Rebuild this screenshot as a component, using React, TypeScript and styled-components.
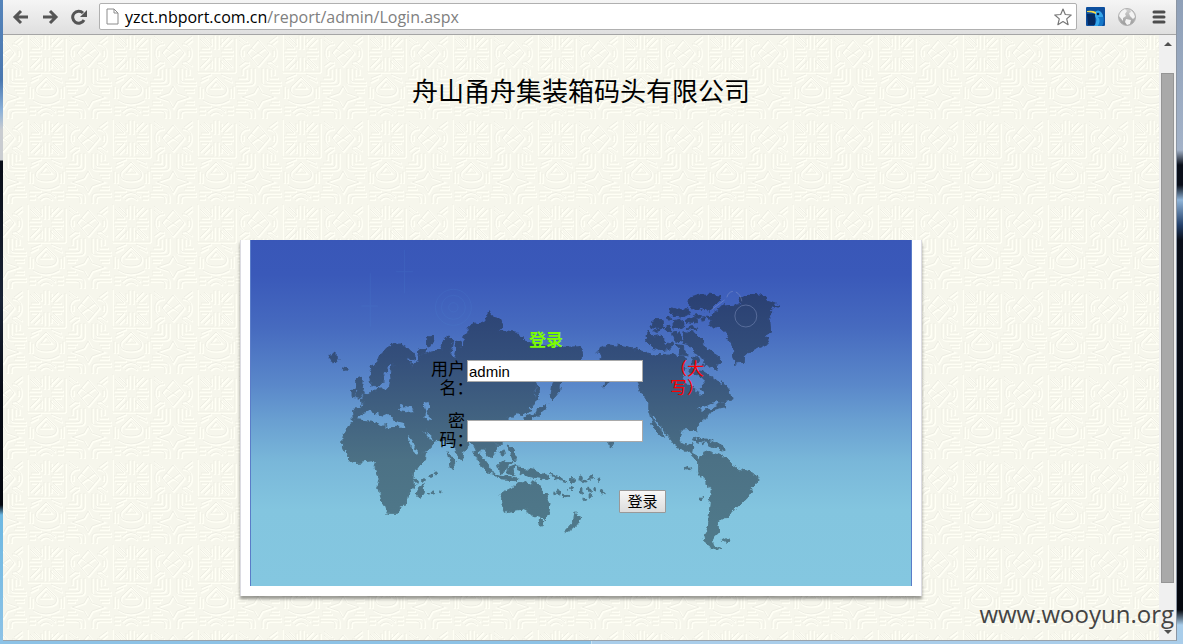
import React from 'react';
import styled, { createGlobalStyle } from 'styled-components';

const GlobalStyle = createGlobalStyle`
  *, *::before, *::after { box-sizing: border-box; }
  body { margin: 0; }
`;

const cjk = `'Liberation Sans', 'Noto Sans CJK SC', sans-serif`;
const chromeFont = `'Open Sans', 'Noto Sans', sans-serif`;

const Desktop = styled.div`
  display: flex;
  min-height: 100vh;
  padding: 0 6px 3px 3px;
  background:
    linear-gradient(180deg, #8fa0b8 0, #a3b2c8 150px, #0a0f1a 165px, #0a0f1a 185px, #8fb4d8 200px, #24406a 225px, #0a0f1a 240px, #05080f 610px, #a9cdea 625px) right / 50% 100% no-repeat,
    linear-gradient(180deg, #5584ba 0, #4a78b0 80px, #8ab0d8 110px, #c9ccd0 130px, #c9ccd0 160px, #080c16 161px, #1a2436 300px, #080c16 390px, #05080f 505px, #6db8e2 515px, #8cc2e6 640px) left / 50% 100% no-repeat;
`;

const BrowserWindow = styled.div`
  display: flex;
  flex: 1;
  flex-direction: column;
  border-right: 1px solid #8b95a3;
  border-bottom: 1px solid #9aa3ab;
  background: #f1f1f1;
`;

const Toolbar = styled.header`
  display: flex;
  align-items: center;
  height: 35px;
  padding: 0 7px 1px 9px;
  border-bottom: 1px solid #a5a5a5;
  background: linear-gradient(#f5f5f5, #dfdfdf);
`;

const NavButton = styled.button`
  display: flex;
  align-items: center;
  justify-content: center;
  width: 29px;
  height: 24px;
  padding: 0 11px 0 0;
  border: 0;
  background: none;
  svg { flex: none; }
`;

const AddressBar = styled.div`
  display: flex;
  flex: 1;
  align-items: center;
  gap: 6px;
  height: 27px;
  margin-right: 8px;
  padding: 0 3px 0 6px;
  border: 1px solid #b0b0b0;
  border-radius: 2px;
  background: #fff;
`;

const Address = styled.div`
  flex: 1;
  color: #808080;
  font: 16px/24px ${chromeFont};
  white-space: nowrap;
  b { color: #000; font-weight: 400; }
`;

const ToolButton = styled.button`
  display: flex;
  align-items: center;
  justify-content: center;
  width: 20px;
  height: 24px;
  padding: 0;
  border: 0;
  background: none;
`;

const Tools = styled.div`
  display: flex;
  gap: 12px;
`;

const Viewport = styled.div`
  display: flex;
  flex: 1;
`;

const Page = styled.main`
  position: relative;
  display: flex;
  flex: 1;
  flex-direction: column;
  align-items: center;
  padding: 35px 8px 44px;
`;

const Texture = styled.svg`
  position: absolute;
  inset: 0;
  width: 100%;
  height: 100%;
`;

const Company = styled.h1`
  position: relative;
  margin: 0 0 130px;
  color: #000;
  font: 400 26px/40px STXingkai, 'Noto Sans CJK SC', sans-serif;
`;

const Card = styled.section`
  position: relative;
  width: 100%;
  max-width: 682px;
  padding: 0 9px 10px;
  border: solid #dcdce2;
  border-width: 0 1px;
  background: #fff;
  box-shadow: 0 3px 3px rgba(0, 0, 0, 0.4);
`;

const Banner = styled.div`
  position: relative;
  min-height: 346px;
  padding: 91px 0 73px 178px;
  border: solid #5a7cc8;
  border-width: 0 1px;
`;

const MapArt = styled.svg`
  position: absolute;
  inset: 0;
  width: 100%;
  height: 100%;
`;

const LoginForm = styled.form`
  position: relative;
  display: grid;
  grid-template-columns: 36px 196px 41px;
  grid-template-rows: 29px 52px 78px auto;
  column-gap: 2px;
  align-items: start;
  font: 17px/19px ${cjk};
`;

const FormTitle = styled.h2`
  grid-column: 1 / 3;
  margin: 0;
  color: #7cfc00;
  font: inherit;
  font-weight: 700;
  text-align: center;
`;

const FieldLabel = styled.label`
  grid-column: 1;
  color: #000;
  font-feature-settings: 'halt';
  text-align: right;
`;

const TextInput = styled.input<{ $centred?: boolean }>`
  width: 176px;
  height: 22px;
  margin: ${(p) => (p.$centred ? 8 : 0)}px 0 0;
  padding: 1px;
  border: 1px solid #a9a9a9;
  border-radius: 0;
  background: #fff;
  color: #000;
  font: 15px/18px 'Liberation Sans', sans-serif;
  outline: 0;
`;

const Hint = styled.span`
  padding-left: 5px;
  color: #f00;
`;

const Actions = styled.div`
  grid-column: 2 / -1;
  padding-left: 152px;
`;

const SubmitButton = styled.button`
  display: block;
  width: 47px;
  height: 23px;
  padding: 0;
  border: 1px solid #999;
  border-radius: 1px;
  background: linear-gradient(#f7f7f7, #dcdcdc);
  color: #000;
  font: 15px/20px ${cjk};
`;

const ScrollTrack = styled.div`
  display: flex;
  flex-direction: column;
  align-items: center;
  justify-content: space-between;
  width: 17px;
  padding: 7px 0 6px;
  background: #f0f0f0;
`;

const ScrollThumb = styled.div`
  flex: 1;
  width: 13px;
  margin: 27px 0 47px;
  border: 1px solid #959595;
  background: #a9a9a9;
`;

const Watermark = styled.div`
  position: absolute;
  right: 9px;
  bottom: 13px;
  color: #444;
  font: 24px/34px ${chromeFont};
`;

const LAND = [
  // Europe and Asia
  'M368 572 366 545 372 538 396 535 402 522 388 510 400 500 425 485 445 478 470 476 480 468 484 445 482 425 492 402 488 395 475 410 463 435 460 455 447 470 435 470 422 460 420 425 432 405 445 395 452 378 470 355 490 343 515 342 525 352 545 362 557 378 550 390 532 382 548 412 570 378 600 365 640 358 635 345 645 322 660 318 670 330 662 370 675 388 682 362 675 335 690 330 700 352 706 346 700 320 718 310 720 290 745 278 768 276 783 243 790 262 815 268 820 285 808 300 845 308 870 310 880 325 900 338 950 345 1000 352 1050 350 1060 362 1060 400 1000 420 940 430 918 460 915 480 920 510 898 545 872 560 862 548 838 564 850 600 820 640 795 640 803 665 788 685 772 676 760 656 745 670 735 650 720 632 714 652 704 665 700 692 692 690 680 660 672 640 650 632 622 628 600 655 575 668 545 664 528 620 500 592 440 580 395 570Z',
  // Africa
  'M340 620 350 595 370 575 395 568 435 565 445 580 470 592 500 592 527 600 535 615 550 650 565 668 592 666 588 690 570 705 555 725 553 750 555 775 538 785 535 810 515 835 498 850 468 850 462 830 452 800 450 780 443 770 448 745 442 720 433 712 438 698 430 692 405 695 370 698 350 675 338 655Z',
  // British Isles, Iceland, Arctic islands
  'M376 448 392 442 398 455 395 470 408 490 390 502 376 500 385 485Z',
  'M366 480 376 472 380 490 368 500Z',
  'M296 376 312 370 328 385 320 396 303 388Z',
  'M590 325 605 318 613 332 604 353 592 345Z',
  'M560 368 570 360 585 358 584 370 570 376Z',
  // Madagascar
  'M568 768 584 762 580 790 572 806 562 800Z',
  'M656 665 666 680 677 700 672 720 665 712Z',
  // Kamchatka, Sakhalin, Japan
  'M972 455 998 455 995 480 975 504 966 498Z',
  'M919 458 930 472 931 510 922 510Z',
  'M946 524 956 520 944 540 926 555 905 567 890 572 884 562 912 552 930 540Z',
  // Indonesia, Philippines, New Guinea
  'M730 662 745 665 775 705 792 730 776 726 752 700Z',
  'M788 732 830 738 866 744 862 752 820 750Z',
  'M802 706 830 690 840 700 830 726 810 730Z',
  'M838 715 862 706 848 720 858 736 840 732Z',
  'M834 648 848 655 866 690 852 692Z',
  'M862 710 890 716 930 724 955 736 962 750 935 745 900 740 875 730Z',
  'M958 730 990 742 1012 758 990 752Z',
  // Australia, Tasmania, New Zealand
  'M813 800 820 785 850 775 862 762 885 752 893 762 908 770 915 750 925 758 938 782 955 800 963 820 960 845 945 867 915 860 900 845 880 838 860 840 825 847 820 830Z',
  'M927 872 946 872 937 892Z',
  'M1035 845 1045 855 1056 860 1045 880 1020 904 1006 904 1030 878Z',
  // North and Central America
  'M1105 368 1112 354 1140 345 1180 350 1230 360 1280 375 1320 372 1362 378 1372 402 1395 420 1425 425 1450 440 1480 465 1482 455 1502 480 1508 510 1480 515 1490 530 1450 540 1430 565 1410 582 1404 610 1392 598 1360 600 1352 620 1358 640 1375 648 1388 640 1395 655 1392 672 1410 682 1412 692 1395 685 1378 668 1340 645 1325 625 1305 600 1275 560 1260 545 1260 520 1240 490 1230 460 1210 430 1160 430 1125 472 1135 440 1110 388 1120 384Z',
  'M1262 548 1272 570 1300 602 1311 628 1290 612 1270 585Z',
  // Canadian archipelago
  'M1250 330 1258 303 1275 320 1300 315 1312 335 1322 358 1300 362 1272 355Z',
  'M1370 305 1400 310 1420 330 1430 355 1465 375 1480 395 1462 400 1466 422 1440 412 1425 390 1405 370 1385 345 1362 340Z',
  'M1380 202 1420 192 1476 195 1470 215 1444 238 1430 245 1410 232 1395 240 1378 218Z',
  'M1265 278 1290 268 1305 275 1296 294 1270 290Z',
  'M1322 240 1340 232 1360 240 1376 232 1384 250 1362 262 1335 258Z',
  'M1338 318 1355 308 1360 330 1350 340 1338 334Z',
  'M1340 345 1365 350 1380 378 1360 375Z',
  'M1330 272 1352 268 1370 282 1352 296 1335 290Z',
  // Greenland
  'M1436 262 1460 245 1484 228 1540 224 1530 208 1562 193 1600 195 1622 215 1650 226 1630 240 1624 260 1626 300 1612 320 1620 340 1590 352 1560 365 1545 380 1544 396 1520 400 1508 385 1515 365 1506 330 1490 308 1470 290 1436 292 1455 272Z',
  // South America
  'M1410 690 1420 675 1445 665 1485 680 1500 695 1530 718 1565 725 1586 740 1582 765 1568 780 1560 800 1530 830 1505 845 1500 865 1480 867 1465 885 1470 905 1450 925 1455 945 1476 952 1455 958 1435 950 1428 915 1440 880 1443 840 1448 775 1435 765 1418 735 1410 720Z',
  'M1480 932 1492 926 1503 932 1490 940Z',
  'M1138 635 1156 640 1142 652Z',
  'M1388 628 1400 622 1420 628 1448 634 1482 648 1490 664 1470 656 1440 642 1410 636Z',
];

const ISLETS: number[][] = [
  [347, 419, 6, 5], [1377, 715, 8, 5], [1417, 808, 4, 4], [560, 752, 7, 4], [582, 750, 6, 4], [604, 738, 6, 4],
  [618, 730, 6, 4], [597, 793, 4, 3], [612, 789, 4, 3], [628, 786, 4, 3], [986, 790, 6, 8], [1012, 795, 10, 5],
  [1028, 775, 6, 7], [1030, 750, 9, 5], [1055, 745, 5, 7], [1068, 755, 9, 4], [1086, 744, 4, 4], [1110, 748, 6, 4],
  [1055, 780, 4, 8], [1080, 780, 4, 9], [1098, 776, 5, 4], [1120, 786, 6, 6], [1066, 808, 4, 4], [1085, 798, 5, 5],
  [1320, 262, 8, 5], [1345, 250, 8, 5], [1318, 298, 9, 7], [1335, 312, 6, 8], [1390, 272, 14, 8], [1408, 258, 10, 7],
  [1390, 295, 14, 5], [1285, 302, 7, 5], [1405, 330, 7, 5], [1325, 345, 6, 9], [1398, 392, 12, 12], [1440, 400, 15, 7],
  [1425, 268, 7, 5], [1300, 288, 8, 5], [820, 670, 5, 8], [846, 698, 6, 4],
];

const SEAS = [
  'M385 568 400 550 420 540 430 555 438 545 455 560 480 555 495 572 527 580 527 590 500 590 478 592 468 582 450 590 440 574Z',
  'M506 535 520 526 530 533 545 532 552 543 530 547 508 544Z',
  'M580 522 597 518 600 530 588 540 596 552 600 570 585 566 586 548Z',
  'M533 618 542 622 552 648 566 668 558 674 545 655Z',
  'M582 600 592 612 606 614 618 626 606 626 588 616Z',
  'M1370 418 1395 425 1424 450 1426 465 1410 475 1426 492 1415 500 1402 480 1380 468 1362 448Z',
  'M1370 382 1382 380 1388 402 1380 420 1366 416Z',
  'M1405 535 1440 525 1462 514 1480 518 1460 528 1420 542Z',
];

function WorldMap() {
  return (
    <MapArt viewBox="63 30 1986 1038" preserveAspectRatio="none" aria-hidden="true">
      <defs>
        <linearGradient id="sky" x1="0" y1="0" x2="0" y2="1">
          <stop offset="0" stopColor="#3957b8" />
          <stop offset="0.1" stopColor="#3a59b9" />
          <stop offset="0.25" stopColor="#466abf" />
          <stop offset="0.42" stopColor="#5a88ca" />
          <stop offset="0.52" stopColor="#699fd1" />
          <stop offset="0.64" stopColor="#79b7d9" />
          <stop offset="0.78" stopColor="#83c5df" />
          <stop offset="1" stopColor="#84c7e0" />
        </linearGradient>
        <linearGradient id="land" gradientUnits="userSpaceOnUse" x1="0" y1="190" x2="0" y2="960">
          <stop offset="0" stopColor="#2a4073" />
          <stop offset="0.25" stopColor="#344f7b" />
          <stop offset="0.45" stopColor="#406080" />
          <stop offset="0.65" stopColor="#4c7185" />
          <stop offset="1" stopColor="#507b8b" />
        </linearGradient>
        <filter id="coast" x="0" y="0" width="1" height="1" colorInterpolationFilters="sRGB">
          <feTurbulence type="fractalNoise" baseFrequency="0.05" numOctaves="3" seed="4" />
          <feDisplacementMap in="SourceGraphic" scale="22" xChannelSelector="R" yChannelSelector="G" />
        </filter>
        <mask id="continents" maskUnits="userSpaceOnUse" x="63" y="30" width="1986" height="1038">
          <g filter="url(#coast)">
            <rect x="63" y="30" width="1986" height="1038" fill="#000" />
            <g fill="#fff" stroke="#fff" strokeWidth="3" strokeLinejoin="round">
              {LAND.map((d) => <path key={d} d={d} />)}
              {ISLETS.map(([x, y, rx, ry]) => <ellipse key={`${x}-${y}`} cx={x} cy={y} rx={rx} ry={ry} />)}
            </g>
            {SEAS.map((d) => <path key={d} d={d} fill="#000" />)}
          </g>
        </mask>
      </defs>
      <rect x="63" y="30" width="1986" height="1038" fill="url(#sky)" />
      <g fill="none" stroke="#4f8fd8" strokeWidth="3" opacity="0.14">
        <circle cx="672" cy="232" r="54" />
        <circle cx="672" cy="232" r="36" />
        <circle cx="672" cy="232" r="14" />
        <path d="M500 125h50M525 60v130M395 228h50M422 130v160" />
      </g>
      <rect x="63" y="30" width="1986" height="1038" fill="url(#land)" mask="url(#continents)" />
      <g fill="none" stroke="#93a3cf" strokeWidth="2" opacity="0.6">
        <circle cx="1552" cy="258" r="33" />
        <path d="M1495 202q4-16 18-18M1522 186q14 6 18 28M1450 238l38-28" />
      </g>
    </MapArt>
  );
}

function Wallpaper() {
  return (
    <Texture aria-hidden="true">
      <defs>
        <g id="relief" fill="none">
          <path d="M0 0v38M0 38h38M38 4v34M3 5l9 9M7 3l8 8M35 5l-9 9M31 3l-8 8M3 33l9-9M7 35l8-8M35 33l-9-9M31 35l-8-8M4 14h8M26 14h8M4 24h8M26 24h8M14 4v8M24 4v8M14 26v8M24 26v8M17 1v14M21 1v14M17 23v14M21 23v14M2 17h12M24 21h12M2 21h12M24 17h12" />
          <path d="M61 6 72 19 61 32 50 19zM52 10a8 8 0 0 0-9 9 8 8 0 0 0 9 9M70 10a8 8 0 0 1 9 9 8 8 0 0 1-9 9M42 2l8 6M80 2l-8 6M42 6l6 5M80 6l-6 5M46 16v6M76 16v6M54 14l14 10M68 14 54 24M42 32l7-5M80 32l-7-5M45 35l7-5M77 35l-7-5" />
          <path d="M19 43 9 53q-3 9 10 9 13 0 10-9zM19 48l-5 6h10zM4 44l10-4M34 44l-10-4M3 48l8-4M35 48l-8-4M6 66q13 8 26 0M2 72h12M24 72h12M10 78q9-9 18 0M13 81q6-6 12 0M2 76h6M30 76h6M2 80h6M30 80h6M2 52v12M5 54v10M36 52v12M33 54v10" />
          <path d="M57 34v14q0 3-5 3H38M65 34v14q0 3 5 3h14M53 34v12q0 2-4 2H38M69 34v12q0 2 4 2h11M49 35v9h-8M73 35v9h8M45 35v6M77 35v6M57 84V78q0-4-5-4H38M65 84V78q0-4 5-4h14M53 84v-4q0-3-4-3H38M69 84v-4q0-3 4-3h11M40 55h10M40 58h8M40 67h8M40 70h10M72 55h10M74 58h8M74 67h8M72 70h10M61 52l4 7 12 4-12 4-4 7-4-7-12-4 12-4z" />
        </g>
        <pattern id="tile" x="24" y="84" width="85" height="85" patternUnits="userSpaceOnUse">
          <rect width="85" height="85" fill="#f6f6ec" />
          <use href="#relief" stroke="#fffff5" strokeWidth="2" x="1" y="1" />
          <use href="#relief" stroke="#ebebe2" strokeWidth="1" opacity="0.85" />
        </pattern>
      </defs>
      <rect width="100%" height="100%" fill="url(#tile)" />
    </Texture>
  );
}

export default function App() {
  return (
    <Desktop>
      <GlobalStyle />
      <BrowserWindow>
        <Toolbar>
          <NavButton aria-label="Back">
            <svg width="18" height="16" viewBox="0 0 18 16" fill="none" stroke="#555" strokeWidth="3">
              <path d="M16 8H4M9 2 3 8l6 6" />
            </svg>
          </NavButton>
          <NavButton aria-label="Forward">
            <svg width="18" height="16" viewBox="0 0 18 16" fill="none" stroke="#555" strokeWidth="3">
              <path d="M2 8h12M9 2l6 6-6 6" />
            </svg>
          </NavButton>
          <NavButton aria-label="Reload">
            <svg width="18" height="16" viewBox="0 0 18 16" fill="none" stroke="#555" strokeWidth="3">
              <path d="M14 11A6 6 0 1 1 13 4" />
              <path d="M17 1v7h-7z" fill="#555" stroke="none" />
            </svg>
          </NavButton>
          <AddressBar>
            <svg width="13" height="17" viewBox="0 0 13 17" fill="#fff" stroke="#8c8c8c">
              <path d="M1 1h7l4 4v11H1zM8 1v4h4" />
            </svg>
            <Address><b>yzct.nbport.com.cn</b>/report/admin/Login.aspx</Address>
            <ToolButton aria-label="Bookmark">
              <svg width="18" height="18" viewBox="0 0 18 18" fill="#fff" stroke="#777" strokeWidth="1.2" strokeLinejoin="round">
                <path d="m9 1 2.3 5.5 5.9.5-4.5 3.9 1.4 5.8L9 13.6l-5.1 3.1 1.4-5.8L.8 7l5.9-.5z" />
              </svg>
            </ToolButton>
          </AddressBar>
          <Tools>
            <ToolButton aria-label="Bird extension">
              <svg width="19" height="19" viewBox="0 0 19 19">
                <rect width="19" height="19" rx="1" fill="#0d4f9e" />
                <path d="M1 7h8v11H2z" fill="#062b62" />
                <path d="M9 5q3-3 6 0 3 3 2 8-1 4-5 6H8q4-5 1-10z" fill="#35a6ea" />
                <path d="M12 10q3 3 0 9h4q3-5 1-9z" fill="#1577c9" />
                <path d="M1 4q5-1 9 1v2Q6 5 1 5z" fill="#f6d94a" />
                <circle cx="12" cy="7" r="1.3" fill="#052450" />
              </svg>
            </ToolButton>
            <ToolButton aria-label="Globe extension">
              <svg width="18" height="18" viewBox="0 0 18 18">
                <defs>
                  <linearGradient id="globe" x1="0" y1="0" x2="0" y2="1">
                    <stop offset="0" stopColor="#d2d2d2" />
                    <stop offset="1" stopColor="#989898" />
                  </linearGradient>
                </defs>
                <circle cx="9" cy="9" r="8.5" fill="url(#globe)" stroke="#b0b0b0" />
                <path d="M1 8q1-5 6-7l2 2-2 3 1 2-3 2v3zM12 2q4 2 5 7l-2 2-3-3-1-3 2-1zM8 11l5 1-1 4-3 1-2-3z" fill="#f3f3f3" />
              </svg>
            </ToolButton>
            <ToolButton aria-label="Menu">
              <svg width="14" height="14" viewBox="0 0 14 14" stroke="#4d4d4d" strokeWidth="3" strokeLinecap="round">
                <path d="M2 2h10M2 7h10M2 12h10" />
              </svg>
            </ToolButton>
          </Tools>
        </Toolbar>
        <Viewport>
          <Page>
            <Wallpaper />
            <Company>舟山甬舟集装箱码头有限公司</Company>
            <Card>
              <Banner>
                <WorldMap />
                <LoginForm onSubmit={(e) => e.preventDefault()}>
                  <FormTitle>登录</FormTitle>
                  <FieldLabel htmlFor="user">用户名：</FieldLabel>
                  <TextInput id="user" type="text" defaultValue="admin" />
                  <Hint>（大写）</Hint>
                  <FieldLabel htmlFor="password">密 码：</FieldLabel>
                  <TextInput id="password" type="password" $centred />
                  <Actions>
                    <SubmitButton type="submit">登录</SubmitButton>
                  </Actions>
                </LoginForm>
              </Banner>
            </Card>
          </Page>
          <ScrollTrack>
            <svg width="8" height="4" viewBox="0 0 8 4"><path d="M0 4 4 0l4 4z" fill="#505050" /></svg>
            <ScrollThumb />
            <svg width="8" height="4" viewBox="0 0 8 4"><path d="m0 0 4 4 4-4z" fill="#505050" /></svg>
          </ScrollTrack>
        </Viewport>
      </BrowserWindow>
      <Watermark>www.wooyun.org</Watermark>
    </Desktop>
  );
}
